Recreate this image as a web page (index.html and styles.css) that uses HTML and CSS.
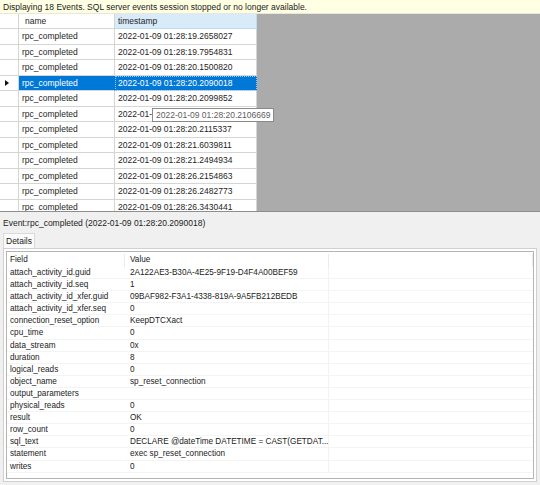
FILE: index.html
```html
<!DOCTYPE html>
<html>
<head>
<meta charset="utf-8">
<link rel="stylesheet" href="styles.css">
</head>
<body>
<div class="page">
  <div class="infobar">Displaying 18 Events. SQL server events session stopped or no longer available.</div>
  <div class="grid-area">
    <div class="grid">
      <div class="row head">
        <div class="c rh"></div>
        <div class="c name">name</div>
        <div class="c ts sorted">timestamp</div>
      </div>
      <div class="row"><div class="c rh"></div><div class="c name">rpc_completed</div><div class="c ts">2022-01-09 01:28:19.2658027</div></div>
      <div class="row"><div class="c rh"></div><div class="c name">rpc_completed</div><div class="c ts">2022-01-09 01:28:19.7954831</div></div>
      <div class="row"><div class="c rh"></div><div class="c name">rpc_completed</div><div class="c ts">2022-01-09 01:28:20.1500820</div></div>
      <div class="row sel"><div class="c rh"><span class="arrow"></span></div><div class="c name">rpc_completed</div><div class="c ts">2022-01-09 01:28:20.2090018</div></div>
      <div class="row"><div class="c rh"></div><div class="c name">rpc_completed</div><div class="c ts">2022-01-09 01:28:20.2099852</div></div>
      <div class="row"><div class="c rh"></div><div class="c name">rpc_completed</div><div class="c ts">2022-01-09 01:28:20.2106669</div></div>
      <div class="row"><div class="c rh"></div><div class="c name">rpc_completed</div><div class="c ts">2022-01-09 01:28:20.2115337</div></div>
      <div class="row"><div class="c rh"></div><div class="c name">rpc_completed</div><div class="c ts">2022-01-09 01:28:21.6039811</div></div>
      <div class="row"><div class="c rh"></div><div class="c name">rpc_completed</div><div class="c ts">2022-01-09 01:28:21.2494934</div></div>
      <div class="row"><div class="c rh"></div><div class="c name">rpc_completed</div><div class="c ts">2022-01-09 01:28:26.2154863</div></div>
      <div class="row"><div class="c rh"></div><div class="c name">rpc_completed</div><div class="c ts">2022-01-09 01:28:26.2482773</div></div>
      <div class="row"><div class="c rh"></div><div class="c name">rpc_completed</div><div class="c ts">2022-01-09 01:28:26.3430441</div></div>
    </div>
    <div class="tooltip">2022-01-09 01:28:20.2106669</div>
  </div>
  <div class="event-label">Event:rpc_completed (2022-01-09 01:28:20.2090018)</div>
  <div class="tabs"><div class="tab">Details</div></div>
  <div class="panel">
    <div class="list">
      <div class="lrow lhead"><div class="f">Field</div><div class="v">Value</div><div class="x"></div></div>
      <div class="lrow"><div class="f">attach_activity_id.guid</div><div class="v">2A122AE3-B30A-4E25-9F19-D4F4A00BEF59</div><div class="x"></div></div>
      <div class="lrow"><div class="f">attach_activity_id.seq</div><div class="v">1</div><div class="x"></div></div>
      <div class="lrow"><div class="f">attach_activity_id_xfer.guid</div><div class="v">09BAF982-F3A1-4338-819A-9A5FB212BEDB</div><div class="x"></div></div>
      <div class="lrow"><div class="f">attach_activity_id_xfer.seq</div><div class="v">0</div><div class="x"></div></div>
      <div class="lrow"><div class="f">connection_reset_option</div><div class="v">KeepDTCXact</div><div class="x"></div></div>
      <div class="lrow"><div class="f">cpu_time</div><div class="v">0</div><div class="x"></div></div>
      <div class="lrow"><div class="f">data_stream</div><div class="v">0x</div><div class="x"></div></div>
      <div class="lrow"><div class="f">duration</div><div class="v">8</div><div class="x"></div></div>
      <div class="lrow"><div class="f">logical_reads</div><div class="v">0</div><div class="x"></div></div>
      <div class="lrow"><div class="f">object_name</div><div class="v">sp_reset_connection</div><div class="x"></div></div>
      <div class="lrow"><div class="f">output_parameters</div><div class="v"></div><div class="x"></div></div>
      <div class="lrow"><div class="f">physical_reads</div><div class="v">0</div><div class="x"></div></div>
      <div class="lrow"><div class="f">result</div><div class="v">OK</div><div class="x"></div></div>
      <div class="lrow"><div class="f">row_count</div><div class="v">0</div><div class="x"></div></div>
      <div class="lrow"><div class="f">sql_text</div><div class="v">DECLARE @dateTime DATETIME = CAST(GETDAT...</div><div class="x"></div></div>
      <div class="lrow"><div class="f">statement</div><div class="v">exec sp_reset_connection</div><div class="x"></div></div>
      <div class="lrow"><div class="f">writes</div><div class="v">0</div><div class="x"></div></div>
    </div>
  </div>
</div>
</body>
</html>
```

FILE: styles.css
```css
html, body {
  margin: 0;
  padding: 0;
}
body {
  width: 540px;
  height: 485px;
  overflow: hidden;
  background: #f0f0f0;
  font-family: "Liberation Sans", Arial, sans-serif;
  color: #1e1e1e;
}
.page {
  display: flex;
  flex-direction: column;
  width: 540px;
  height: 485px;
}
.infobar {
  height: 14px;
  line-height: 14px;
  background: #ffffe3;
  padding-left: 3px;
  font-size: 8.5px;
  color: #222;
  box-sizing: border-box;
  border-bottom: 1px solid #e8e8d8;
}
.grid-area {
  position: relative;
  height: 198px;
  background: #ababab;
  border-bottom: 1px solid #8e8e8e;
  overflow: hidden;
  box-sizing: border-box;
}
.grid {
  width: 257px;
  background: #fff;
  font-size: 8.5px;
}
.row {
  display: grid;
  grid-template-columns: 19px 96px 142px;
  height: 15.5px;
}
.row.head {
  height: 15px;
}
.c {
  box-sizing: border-box;
  border-right: 1px solid #d5d5d5;
  border-bottom: 1px solid #d5d5d5;
  padding-left: 3px;
  line-height: 14.5px;
  white-space: nowrap;
  overflow: hidden;
}
.head .c {
  line-height: 14px;
  border-bottom: 1px solid #d5d5d5;
}
.head .name {
  padding-left: 6px;
}
.head .sorted {
  background: #d9ebf9;
  border-right: 1px solid #bcdcf4;
  border-bottom: 1px solid #bcdcf4;
}
.rh {
  position: relative;
  padding: 0;
}
.sel .name, .sel .ts {
  background: #0078d7;
  color: #fff;
  border-right-color: #0078d7;
}
.sel .ts {
  outline: 1px dotted #9cc7ec;
  outline-offset: -1px;
}
.arrow {
  position: absolute;
  left: 5px;
  top: 4px;
  width: 0;
  height: 0;
  border-top: 3.5px solid transparent;
  border-bottom: 3.5px solid transparent;
  border-left: 4px solid #111;
}
.tooltip {
  position: absolute;
  left: 152px;
  top: 94px;
  height: 14px;
  line-height: 13px;
  padding: 0 3px;
  box-sizing: border-box;
  background: #fff;
  border: 1px solid #8a8a8a;
  color: #606060;
  font-size: 8.5px;
  white-space: nowrap;
}
.event-label {
  height: 21px;
  line-height: 22px;
  padding-left: 3px;
  font-size: 8.5px;
  color: #222;
}
.tabs {
  display: flex;
  padding-left: 3px;
  height: 15px;
}
.tab {
  width: 32px;
  box-sizing: border-box;
  background: #fbfbfb;
  border: 1px solid #d9d9d9;
  border-bottom: none;
  font-size: 8.5px;
  line-height: 14px;
  text-align: center;
  color: #222;
}
.panel {
  margin: 0 3px 3px 3px;
  flex: 1;
  border: 1px solid #d0d0d0;
  background: #fff;
  padding: 2px;
  display: flex;
}
.list {
  flex: 1;
  border: 1px solid #b4b4b4;
  background: #fff;
  padding-top: 2px;
  font-size: 8.2px;
  color: #222;
  overflow: hidden;
}
.lrow {
  display: grid;
  grid-template-columns: 118px 204px 1fr;
  height: 12.1px;
  line-height: 12px;
  border-bottom: 1px solid #f4f4f4;
  box-sizing: border-box;
}
.lhead {
  height: 13px;
  border-bottom: none;
}
.lrow > div {
  padding-left: 3px;
  white-space: nowrap;
  overflow: hidden;
}
.lrow .v {
  padding-left: 5px;
  border-right: 1px solid #f2f2f2;
}
.lhead > div {
  border-right: 1px solid #eaeaea;
}
.lhead .v {
  border-right: 1px solid #eaeaea;
}
```
